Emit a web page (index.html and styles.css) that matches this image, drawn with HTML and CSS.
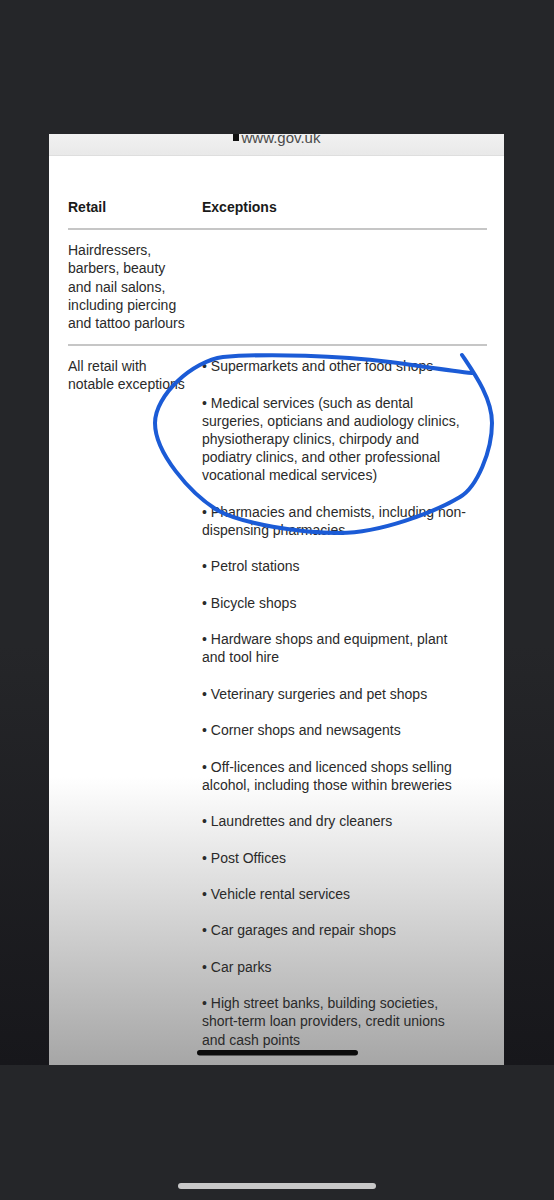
FILE: index.html
```html
<!DOCTYPE html>
<html lang="en">

<head>
    <meta charset="UTF-8">
    <meta name="viewport" content="width=device-width, initial-scale=1.0">
    <title>Retail exceptions - www.gov.uk</title>
    <link rel="stylesheet" href="styles.css">
</head>

<body>

    <div class="phone">
        <div class="screen">
            <div class="card">
                <!-- Browser address bar, cut off at the top of the screenshot -->
                <div class="urlbar">
                    <span class="lock"></span>
                    <span class="url">www.gov.uk</span>
                </div>

                <table class="rules">
                    <thead>
                        <tr>
                            <th class="col-business">Retail</th>
                            <th>Exceptions</th>
                        </tr>
                    </thead>
                    <tbody>
                        <tr>
                            <td>Hairdressers,<br>barbers, beauty<br>and nail salons,<br>including piercing<br>and tattoo parlours</td>
                            <td></td>
                        </tr>
                        <tr class="last-row">
                            <td>All retail with<br>notable exceptions</td>
                            <td>
                                <p>• Supermarkets and other food shops</p>
                                <p>• Medical services (such as dental<br>surgeries, opticians and audiology clinics,<br>physiotherapy clinics, chirpody and<br>podiatry clinics, and other professional<br>vocational medical services)</p>
                                <p>• Pharmacies and chemists, including non-<br>dispensing pharmacies</p>
                                <p>• Petrol stations</p>
                                <p>• Bicycle shops</p>
                                <p>• Hardware shops and equipment, plant<br>and tool hire</p>
                                <p>• Veterinary surgeries and pet shops</p>
                                <p>• Corner shops and newsagents</p>
                                <p>• Off-licences and licenced shops selling<br>alcohol, including those within breweries</p>
                                <p>• Laundrettes and dry cleaners</p>
                                <p>• Post Offices</p>
                                <p>• Vehicle rental services</p>
                                <p>• Car garages and repair shops</p>
                                <p>• Car parks</p>
                                <p>• High street banks, building societies,<br>short-term loan providers, credit unions<br>and cash points</p>
                            </td>
                        </tr>
                    </tbody>
                </table>

                <!-- Pen marks drawn over the screenshot -->
                <svg class="scribble" viewBox="49 134 455 931" width="455" height="931">
                    <path class="circle"
                        d="M462,355 C474,373 492,398 492,423 C492,451 477,487 460,497 C435,512 380,533 340,533 C300,533 242,524 217,510 C190,493 155,453 155,423 C155,395 193,361 223,357 C270,353 340,356 390,362 C420,366 452,371 472,373" />
                    <rect class="home-line" x="197" y="1050" width="161" height="5.5" rx="2.75" />
                </svg>
            </div>
        </div>
        <div class="home-bar"></div>
    </div>

</body>

</html>
```

FILE: styles.css
```css
body,
html {
    margin: 0;
    height: 100%;
    background: #252629;
    font-family: "Liberation Sans", Arial, sans-serif;
}

* {
    box-sizing: border-box;
}

.phone {
    padding-top: 134px;
    height: 1200px;
    overflow: hidden;
}

.screen {
    height: 931px;
    background: linear-gradient(#252629 55%, #17171b);
}

.card {
    position: relative;
    margin-left: 49px;
    width: 455px;
    height: 931px;
    overflow: hidden;
    background: linear-gradient(#ffffff 69%, #a6a6a6);
    color: #2a2a2a;
}

.urlbar {
    display: flex;
    justify-content: center;
    align-items: flex-start;
    gap: 3px;
    height: 22px;
    overflow: hidden;
    background: linear-gradient(#f1f1f1, #e9e9e9);
    border-bottom: 1px solid #dedede;
}

.lock {
    width: 6px;
    height: 7px;
    background: #111;
}

.url {
    margin-top: -4px;
    font-size: 15px;
    line-height: 16px;
    color: #4a4a4a;
}

.rules {
    margin: 42px 0 0 19px;
    width: 419px;
    border-collapse: separate;
    border-spacing: 0;
    font-size: 14px;
    line-height: 18.2px;
}

.rules th {
    padding: 0 0 12px;
    text-align: left;
    font-weight: bold;
    color: #1a1a1a;
    border-bottom: 2px solid #c6c6c6;
}

.col-business {
    width: 134px;
}

.rules td {
    padding: 11px 0 12px;
    vertical-align: top;
    border-bottom: 2px solid #c6c6c6;
}

.rules .last-row td {
    border-bottom: none;
}

.rules p {
    margin: 0 0 18.2px;
}

.scribble {
    position: absolute;
    top: 0;
    left: 0;
    pointer-events: none;
}

.circle {
    fill: none;
    stroke: #1b5bd6;
    stroke-width: 4;
    stroke-linecap: round;
    stroke-linejoin: round;
}

.home-line {
    fill: #0b0b0b;
}

.home-bar {
    margin: 118px auto 0;
    width: 198px;
    height: 6px;
    border-radius: 3px;
    background: #c8c8c8;
}
```
